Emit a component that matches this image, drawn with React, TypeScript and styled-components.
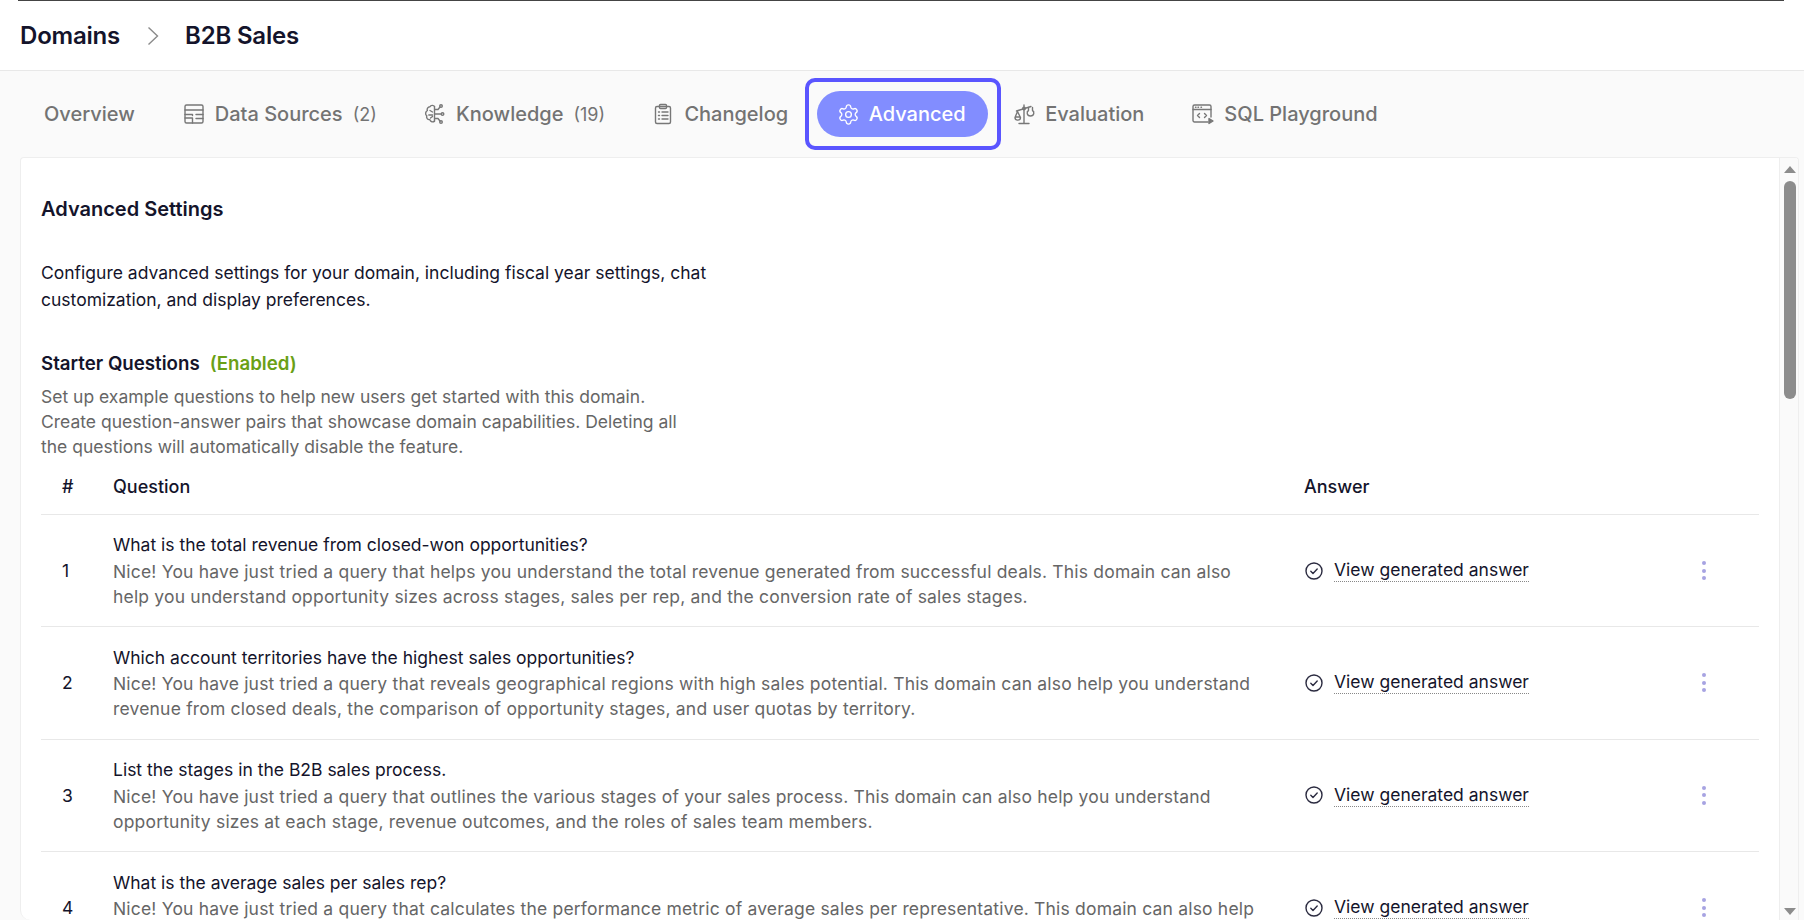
import React from "react";
import styled, { createGlobalStyle } from "styled-components";
import { Settings } from "lucide-react";

const GlobalStyle = createGlobalStyle`
  html, body {
    margin: 0;
    height: 920px;
    overflow: hidden;
    background: #ffffff;
    font-family: "Inter", "Liberation Sans", sans-serif;
  }
`;

const Page = styled.div`
  width: 1804px;
  height: 920px;
  display: flex;
  flex-direction: column;
  overflow: hidden;
`;

const TopRule = styled.div`
  height: 1px;
  margin: 0 20px 0 18px;
  background: #444444;
  flex-shrink: 0;
`;

const Header = styled.header`
  height: 69px;
  display: flex;
  align-items: center;
  padding-left: 20px;
  border-bottom: 1px solid #e8e8e8;
  flex-shrink: 0;
`;

const Crumb = styled.span`
  font-size: 24px;
  font-weight: 600;
  color: #14142b;
  letter-spacing: -0.2px;
`;

const CrumbSeparator = styled.svg`
  width: 12px;
  height: 20px;
  margin: 0 26px 0 27px;
`;

const Workspace = styled.main`
  flex: 1;
  min-height: 0;
  display: flex;
  flex-direction: column;
  background: #fafafa;
`;

const TabBar = styled.nav`
  height: 86px;
  display: flex;
  align-items: center;
  padding-left: 20px;
  flex-shrink: 0;
`;

const Tab = styled.div<{ $active?: boolean }>`
  position: relative;
  height: 46px;
  display: flex;
  align-items: center;
  gap: 10px;
  padding: ${(p) => (p.$active ? "0 22px 0 21px" : "0 24px")};
  margin: ${(p) => (p.$active ? "0 1.6px 0 4.5px" : "0")};
  border-radius: 23px;
  font-size: 20px;
  font-weight: 500;
  color: ${(p) => (p.$active ? "#ffffff" : "#737373")};
  background: ${(p) => (p.$active ? "#828dff" : "transparent")};
  white-space: nowrap;

  ${(p) =>
    p.$active &&
    `&::after {
      content: "";
      position: absolute;
      inset: -13px -13px -13px -12px;
      border: 4px solid #5a55ff;
      border-radius: 10px;
    }`}
`;

const TabCount = styled.span`
  font-size: 18px;
  font-weight: 400;
  margin-right: -0.7px;
`;

const TabIcon = styled.svg`
  width: 22px;
  height: 22px;
  flex-shrink: 0;
  fill: none;
  stroke: #777777;
  stroke-width: 1.4;
  stroke-linecap: round;
  stroke-linejoin: round;
`;

const GearIcon = styled(Settings)`
  margin: 0 -1px;
  flex-shrink: 0;
`;

const Panel = styled.section`
  flex: 1;
  min-height: 0;
  margin: 0 5px 0 20px;
  display: flex;
  background: #ffffff;
  border: 1px solid #eeeeee;
  border-bottom: none;
  border-radius: 4px 4px 0 10px;
  overflow: hidden;
`;

const Content = styled.div`
  flex: 1;
  min-width: 0;
  padding: 35px 20px 0 20px;
  overflow: hidden;
`;

const Title = styled.h1`
  margin: 0;
  font-size: 20px;
  line-height: 32px;
  font-weight: 600;
  color: #14142b;
`;

const Intro = styled.p`
  margin: 34px 0 0;
  width: 680px;
  font-size: 17.5px;
  line-height: 27px;
  color: #14142b;
`;

const SectionTitle = styled.h2`
  margin: 37px 0 0;
  font-size: 18.7px;
  line-height: 28px;
  font-weight: 600;
  color: #14142b;
`;

const EnabledTag = styled.span`
  margin-left: 10px;
  color: #6aa016;
`;

const SectionHint = styled.p`
  margin: 6px 0 0;
  width: 640px;
  font-size: 17.5px;
  line-height: 25px;
  color: #666666;
`;

const TableRow = styled.div<{ $head?: boolean }>`
  display: grid;
  grid-template-columns: 72px 1191px 1fr;
  align-items: center;
  height: ${(p) => (p.$head ? "55.9px" : "112.4px")};
  border-bottom: 1px solid #e8e8e8;
  box-sizing: border-box;
  font-size: ${(p) => (p.$head ? "18px" : "17.5px")};
  color: #14142b;
`;

const HeadCell = styled.div<{ $index?: boolean }>`
  font-weight: 500;
  padding-left: ${(p) => (p.$index ? "21px" : "0")};
`;

const IndexCell = styled.div`
  padding-left: 21px;
`;

const QuestionText = styled.div`
  line-height: 25px;
  max-width: 1150px;
`;

const QuestionTitle = styled.div`
  margin-bottom: 1.5px;
`;

const AnswerHint = styled.div`
  color: #666666;
  letter-spacing: 0.185px;
`;

const AnswerCell = styled.div`
  display: flex;
  align-items: center;
  padding-right: 53px;
`;

const AnswerLink = styled.a`
  margin-left: 11px;
  color: #14142b;
  border-bottom: 1px dotted #888888;
  line-height: 22px;
`;

const CheckIcon = styled.svg`
  width: 18px;
  height: 18px;
  margin-left: 1px;
  fill: none;
  stroke: #2b2b40;
  stroke-width: 1.4;
  stroke-linecap: round;
  stroke-linejoin: round;
`;

const RowMenu = styled.div`
  margin-left: auto;
  display: flex;
  flex-direction: column;
  gap: 3.5px;
`;

const Dot = styled.span`
  width: 4px;
  height: 4px;
  border-radius: 50%;
  background: #a7a3e2;
`;

const ScrollTrack = styled.div`
  width: 19px;
  flex-shrink: 0;
  display: flex;
  flex-direction: column;
  align-items: center;
  padding: 8px 0 5px 1px;
  box-sizing: border-box;
  background: #fafafa;
  border-left: 1px solid #eeeeee;
`;

const ScrollArrow = styled.div<{ $down?: boolean }>`
  width: 0;
  height: 0;
  border-left: 6.5px solid transparent;
  border-right: 6.5px solid transparent;
  ${(p) =>
    p.$down
      ? "border-top: 7px solid #8c8c8c; margin-top: auto;"
      : "border-bottom: 7px solid #8c8c8c;"}
`;

const ScrollThumb = styled.div`
  width: 12px;
  height: 218px;
  margin-top: 8px;
  border-radius: 6px;
  background: #8c8c8c;
`;

const questions = [
  {
    q: "What is the total revenue from closed-won opportunities?",
    a: "Nice! You have just tried a query that helps you understand the total revenue generated from successful deals. This domain can also help you understand opportunity sizes across stages, sales per rep, and the conversion rate of sales stages.",
  },
  {
    q: "Which account territories have the highest sales opportunities?",
    a: "Nice! You have just tried a query that reveals geographical regions with high sales potential. This domain can also help you understand revenue from closed deals, the comparison of opportunity stages, and user quotas by territory.",
  },
  {
    q: "List the stages in the B2B sales process.",
    a: "Nice! You have just tried a query that outlines the various stages of your sales process. This domain can also help you understand opportunity sizes at each stage, revenue outcomes, and the roles of sales team members.",
  },
  {
    q: "What is the average sales per sales rep?",
    a: "Nice! You have just tried a query that calculates the performance metric of average sales per representative. This domain can also help you understand sales across reps.",
  },
];

const DataSourcesIcon = () => (
  <TabIcon viewBox="0 0 22 22">
    <rect x="2" y="2" width="18" height="18" rx="1.5" />
    <path d="M2 7h18M2 11.5h7.5M13 11.5h7M2 15h7.5v5M13 15.5h7M9.5 11.5v1" />
  </TabIcon>
);

const KnowledgeIcon = () => (
  <TabIcon viewBox="0 0 22 22">
    <path d="M10.5 3.5C9.5 1.8 6.8 2 6 3.8 3.8 3.8 2.6 6 3.4 7.5 1.3 8.7 1 11.5 2.8 12.8 2 14.8 3.6 17 5.8 16.6 6.4 19 9.3 19.6 10.5 18" />
    <path d="M6 7.5 8.5 9M4.8 12h3.7M6.5 15l2-1.5" />
    <path d="M10.5 3.5V18M10.5 6.5h3.5l2-2.5M10.5 11h6M10.5 15.5H14l2 2.5" />
    <circle cx="17" cy="3" r="1.3" />
    <circle cx="18.5" cy="11" r="1.3" />
    <circle cx="17" cy="19" r="1.3" />
  </TabIcon>
);

const ChangelogIcon = () => (
  <TabIcon viewBox="0 0 22 22">
    <rect x="3.5" y="3.5" width="15" height="17" rx="1.5" />
    <rect x="7.5" y="1.5" width="7" height="4" rx="1" />
    <path d="M6.5 9h1M10 9h6M6.5 12.5h1M10 12.5h6M6.5 16h1M10 16h6" />
  </TabIcon>
);

const EvaluationIcon = () => (
  <TabIcon viewBox="0 0 22 22">
    <path d="M11 2v18M6 20.5h10M3.5 8 18 3.5" />
    <circle cx="11" cy="5.5" r="1.3" />
    <path d="M4.5 8.5 2 14.5c0 3.5 5.5 3.5 5.5 0L4.5 8.5zM2.5 14h4.5" />
    <path d="M15.5 4.5v3c-2 1-2 5.5 2 5.5s4-4.5 2-5.5v-3" />
  </TabIcon>
);

const PlaygroundIcon = () => (
  <TabIcon viewBox="0 0 22 22">
    <path d="M16 19H2.5A1.5 1.5 0 0 1 1 17.5v-14A1.5 1.5 0 0 1 2.5 2h15A1.5 1.5 0 0 1 19 3.5V14" />
    <path d="M1 6.5h18M3.5 4.3h.5M6 4.3h.5M9 4.3h.5" />
    <path d="M7.5 10.5 5.5 12.5l2 2M12.5 10.5l2 2-2 2" />
    <path d="M17 15.5v5l4-2.5-4-2.5z" fill="#777777" />
  </TabIcon>
);

export default function App() {
  return (
    <Page>
      <GlobalStyle />
      <TopRule />
      <Header>
        <Crumb>Domains</Crumb>
        <CrumbSeparator viewBox="0 0 12 20">
          <path d="M1.5 1.5 10.5 10 1.5 18.5" fill="none" stroke="#8a8a8a" strokeWidth="1.4" />
        </CrumbSeparator>
        <Crumb>B2B Sales</Crumb>
      </Header>
      <Workspace>
        <TabBar>
          <Tab>Overview</Tab>
          <Tab>
            <DataSourcesIcon />
            Data Sources
            <TabCount>(2)</TabCount>
          </Tab>
          <Tab>
            <KnowledgeIcon />
            Knowledge
            <TabCount>(19)</TabCount>
          </Tab>
          <Tab>
            <ChangelogIcon />
            Changelog
          </Tab>
          <Tab $active>
            <GearIcon size={23} strokeWidth={1.4} color="#ffffff" />
            Advanced
          </Tab>
          <Tab>
            <EvaluationIcon />
            Evaluation
          </Tab>
          <Tab>
            <PlaygroundIcon />
            SQL Playground
          </Tab>
        </TabBar>
        <Panel>
          <Content>
            <Title>Advanced Settings</Title>
            <Intro>
              Configure advanced settings for your domain, including fiscal year settings, chat
              customization, and display preferences.
            </Intro>
            <SectionTitle>
              Starter Questions<EnabledTag>(Enabled)</EnabledTag>
            </SectionTitle>
            <SectionHint>
              Set up example questions to help new users get started with this domain. Create
              question-answer pairs that showcase domain capabilities. Deleting all the questions
              will automatically disable the feature.
            </SectionHint>
            <TableRow $head>
              <HeadCell $index>#</HeadCell>
              <HeadCell>Question</HeadCell>
              <HeadCell>Answer</HeadCell>
            </TableRow>
            {questions.map((item, i) => (
              <TableRow key={item.q}>
                <IndexCell>{i + 1}</IndexCell>
                <QuestionText>
                  <QuestionTitle>{item.q}</QuestionTitle>
                  <AnswerHint>{item.a}</AnswerHint>
                </QuestionText>
                <AnswerCell>
                  <CheckIcon viewBox="0 0 18 18">
                    <circle cx="9" cy="9" r="8" />
                    <path d="m5.8 9.3 2.2 2.2 4.2-4.4" />
                  </CheckIcon>
                  <AnswerLink>View generated answer</AnswerLink>
                  <RowMenu>
                    <Dot />
                    <Dot />
                    <Dot />
                  </RowMenu>
                </AnswerCell>
              </TableRow>
            ))}
          </Content>
          <ScrollTrack>
            <ScrollArrow />
            <ScrollThumb />
            <ScrollArrow $down />
          </ScrollTrack>
        </Panel>
      </Workspace>
    </Page>
  );
}
